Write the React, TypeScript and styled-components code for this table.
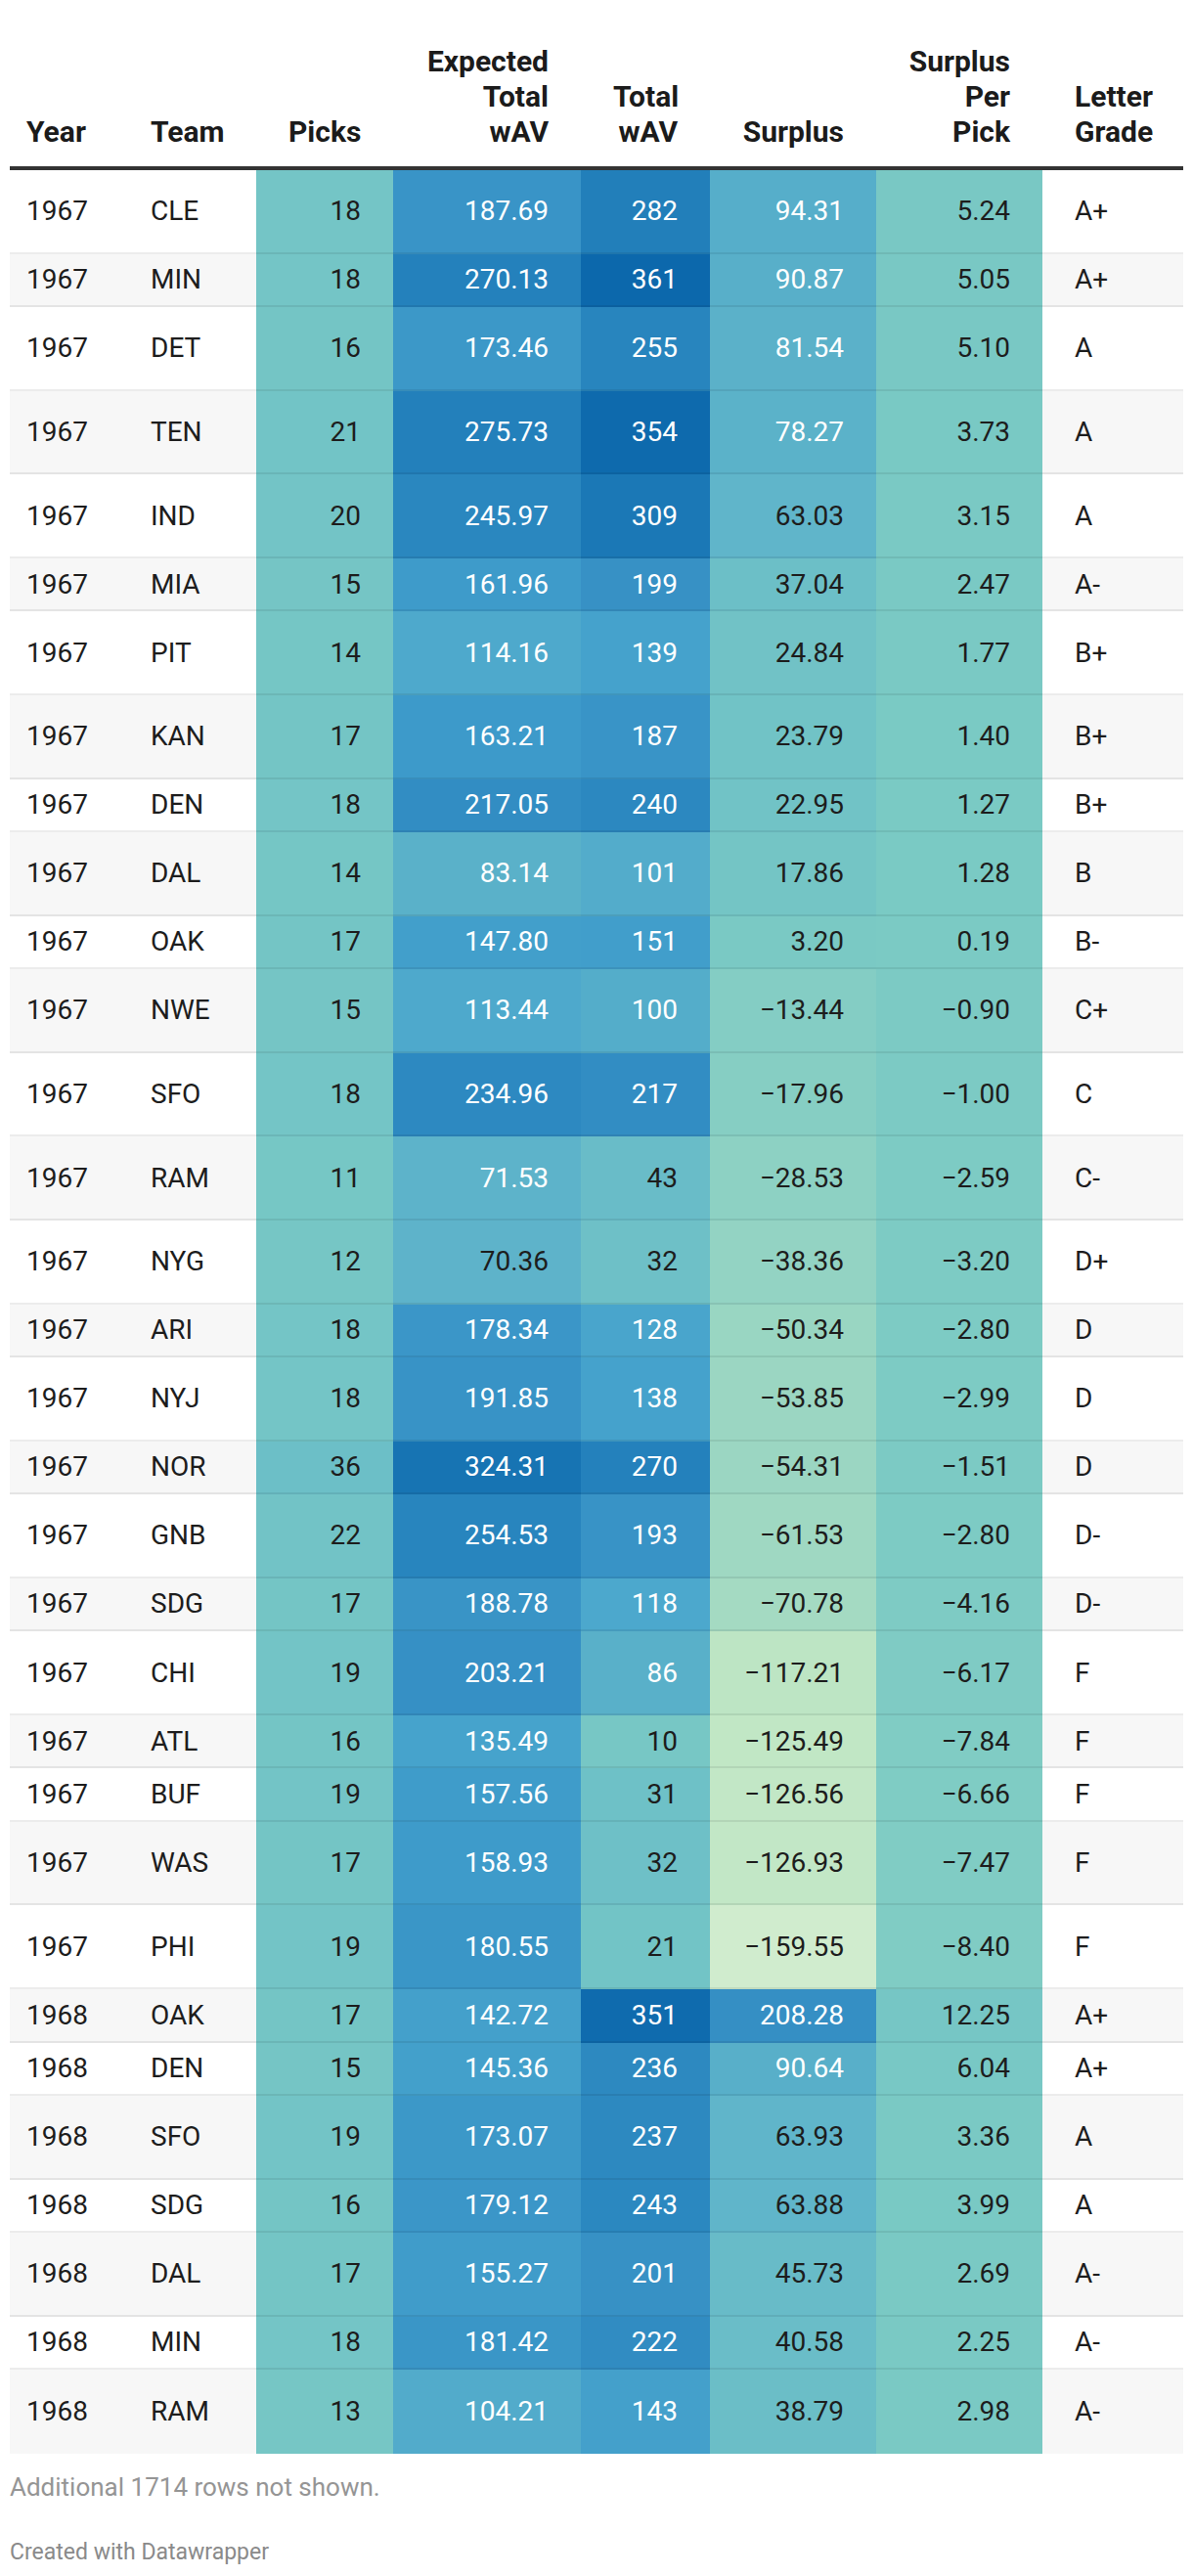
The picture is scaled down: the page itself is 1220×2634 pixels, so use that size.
import React from "react";
import styled, { createGlobalStyle } from "styled-components";

const GlobalStyle = createGlobalStyle`
  html, body {
    margin: 0;
    padding: 0;
    background: #ffffff;
  }
  body {
    font-family: Roboto, "Liberation Sans", Arial, sans-serif;
    color: #1d1d1d;
    -webkit-font-smoothing: antialiased;
  }
  * { box-sizing: border-box; }
`;

const COLS = "111px 141px 140px 192px 132px 170px 170px 144px";

type Row = {
  year: string;
  team: string;
  picks: string;
  exp: string;
  total: string;
  surplus: string;
  spp: string;
  grade: string;
  tall: boolean;
};

const raw: [string, string, string, string, string, string, string, string, number][] = [
  ["1967", "CLE", "18", "187.69", "282", "94.31", "5.24", "A+", 1],
  ["1967", "MIN", "18", "270.13", "361", "90.87", "5.05", "A+", 0],
  ["1967", "DET", "16", "173.46", "255", "81.54", "5.10", "A", 1],
  ["1967", "TEN", "21", "275.73", "354", "78.27", "3.73", "A", 1],
  ["1967", "IND", "20", "245.97", "309", "63.03", "3.15", "A", 1],
  ["1967", "MIA", "15", "161.96", "199", "37.04", "2.47", "A-", 0],
  ["1967", "PIT", "14", "114.16", "139", "24.84", "1.77", "B+", 1],
  ["1967", "KAN", "17", "163.21", "187", "23.79", "1.40", "B+", 1],
  ["1967", "DEN", "18", "217.05", "240", "22.95", "1.27", "B+", 0],
  ["1967", "DAL", "14", "83.14", "101", "17.86", "1.28", "B", 1],
  ["1967", "OAK", "17", "147.80", "151", "3.20", "0.19", "B-", 0],
  ["1967", "NWE", "15", "113.44", "100", "-13.44", "-0.90", "C+", 1],
  ["1967", "SFO", "18", "234.96", "217", "-17.96", "-1.00", "C", 1],
  ["1967", "RAM", "11", "71.53", "43", "-28.53", "-2.59", "C-", 1],
  ["1967", "NYG", "12", "70.36", "32", "-38.36", "-3.20", "D+", 1],
  ["1967", "ARI", "18", "178.34", "128", "-50.34", "-2.80", "D", 0],
  ["1967", "NYJ", "18", "191.85", "138", "-53.85", "-2.99", "D", 1],
  ["1967", "NOR", "36", "324.31", "270", "-54.31", "-1.51", "D", 0],
  ["1967", "GNB", "22", "254.53", "193", "-61.53", "-2.80", "D-", 1],
  ["1967", "SDG", "17", "188.78", "118", "-70.78", "-4.16", "D-", 0],
  ["1967", "CHI", "19", "203.21", "86", "-117.21", "-6.17", "F", 1],
  ["1967", "ATL", "16", "135.49", "10", "-125.49", "-7.84", "F", 0],
  ["1967", "BUF", "19", "157.56", "31", "-126.56", "-6.66", "F", 0],
  ["1967", "WAS", "17", "158.93", "32", "-126.93", "-7.47", "F", 1],
  ["1967", "PHI", "19", "180.55", "21", "-159.55", "-8.40", "F", 1],
  ["1968", "OAK", "17", "142.72", "351", "208.28", "12.25", "A+", 0],
  ["1968", "DEN", "15", "145.36", "236", "90.64", "6.04", "A+", 0],
  ["1968", "SFO", "19", "173.07", "237", "63.93", "3.36", "A", 1],
  ["1968", "SDG", "16", "179.12", "243", "63.88", "3.99", "A", 0],
  ["1968", "DAL", "17", "155.27", "201", "45.73", "2.69", "A-", 1],
  ["1968", "MIN", "18", "181.42", "222", "40.58", "2.25", "A-", 0],
  ["1968", "RAM", "13", "104.21", "143", "38.79", "2.98", "A-", 1],
];

const rows: Row[] = raw.map((r) => ({
  year: r[0],
  team: r[1],
  picks: r[2],
  exp: r[3],
  total: r[4],
  surplus: r[5],
  spp: r[6],
  grade: r[7],
  tall: r[8] === 1,
}));

const STOPS: [number, number, number, number][] = [
  [-160, 208, 236, 206],
  [-120, 191, 230, 196],
  [-70, 164, 218, 194],
  [-30, 142, 209, 195],
  [0, 123, 202, 196],
  [36, 108, 191, 199],
  [63, 96, 181, 202],
  [90, 88, 175, 201],
  [118, 76, 168, 205],
  [160, 62, 155, 202],
  [200, 55, 145, 197],
  [255, 40, 133, 190],
  [310, 27, 120, 182],
  [361, 12, 104, 172],
];

function heat(v: number): string {
  if (v <= STOPS[0][0]) return `rgb(${STOPS[0][1]},${STOPS[0][2]},${STOPS[0][3]})`;
  for (let i = 1; i < STOPS.length; i++) {
    const a = STOPS[i - 1];
    const b = STOPS[i];
    if (v <= b[0]) {
      const t = (v - a[0]) / (b[0] - a[0]);
      const c = [1, 2, 3].map((k) => Math.round(a[k] + (b[k] - a[k]) * t));
      return `rgb(${c[0]},${c[1]},${c[2]})`;
    }
  }
  const l = STOPS[STOPS.length - 1];
  return `rgb(${l[1]},${l[2]},${l[3]})`;
}

const fmt = (s: string) => s.replace("-", "\u2212");

const Page = styled.div`
  width: 1220px;
  padding: 28px 10px 0 10px;
`;

const Table = styled.div`
  width: 1200px;
`;

const HeadRow = styled.div`
  display: grid;
  grid-template-columns: ${COLS};
  align-items: end;
  border-bottom: 4px solid #333333;
`;

const Th = styled.div<{ $right?: boolean; $first?: boolean }>`
  padding: 17px 33px 17px ${(p) => (p.$first ? "17px" : "33px")};
  font-size: 30px;
  line-height: 36px;
  font-weight: 700;
  color: #1b1b1b;
  text-align: ${(p) => (p.$right ? "right" : "left")};
`;

const BodyRow = styled.div<{ $tall: boolean; $odd: boolean }>`
  display: grid;
  grid-template-columns: ${COLS};
  height: ${(p) => (p.$tall ? "85.6px" : "54.5px")};
  background: ${(p) => (p.$odd ? "#f7f7f7" : "#ffffff")};
`;

const Td = styled.div<{ $right?: boolean; $first?: boolean; $last?: boolean }>`
  display: flex;
  align-items: center;
  justify-content: ${(p) => (p.$right ? "flex-end" : "flex-start")};
  padding: 0 33px 0 ${(p) => (p.$first ? "17px" : "33px")};
  font-size: 28px;
  font-weight: 400;
  border-bottom: ${(p) => (p.$last ? "0" : "2px solid rgba(0, 0, 0, 0.075)")};
  white-space: nowrap;
`;

const HeatTd = styled(Td)<{ $bg: string; $light: boolean }>`
  background: ${(p) => p.$bg};
  color: ${(p) => (p.$light ? "#ffffff" : "#1d1d1d")};
`;

const Notes = styled.div`
  margin-top: 19px;
  font-size: 26px;
  line-height: 31px;
  color: #959595;
`;

const Credit = styled.div`
  margin-top: 37px;
  font-size: 23px;
  line-height: 28px;
  color: #8a8a8a;
`;

function Heat({ value, last }: { value: string; last: boolean }) {
  const n = parseFloat(value);
  return (
    <HeatTd $right $last={last} $bg={heat(n)} $light={n >= 71}>
      {fmt(value)}
    </HeatTd>
  );
}

export default function App() {
  return (
    <>
      <GlobalStyle />
      <Page>
        <Table>
          <HeadRow>
            <Th $first>Year</Th>
            <Th>Team</Th>
            <Th $right>Picks</Th>
            <Th $right>
              Expected
              <br />
              Total
              <br />
              wAV
            </Th>
            <Th $right>
              Total
              <br />
              wAV
            </Th>
            <Th $right>Surplus</Th>
            <Th $right>
              Surplus
              <br />
              Per
              <br />
              Pick
            </Th>
            <Th>
              Letter
              <br />
              Grade
            </Th>
          </HeadRow>
          {rows.map((r, i) => {
            const last = i === rows.length - 1;
            return (
              <BodyRow key={i} $tall={r.tall} $odd={i % 2 === 1}>
                <Td $first $last={last}>{r.year}</Td>
                <Td $last={last}>{r.team}</Td>
                <Heat value={r.picks} last={last} />
                <Heat value={r.exp} last={last} />
                <Heat value={r.total} last={last} />
                <Heat value={r.surplus} last={last} />
                <Heat value={r.spp} last={last} />
                <Td $last={last}>{r.grade}</Td>
              </BodyRow>
            );
          })}
        </Table>
        <Notes>Additional 1714 rows not shown.</Notes>
        <Credit>Created with Datawrapper</Credit>
      </Page>
    </>
  );
}
